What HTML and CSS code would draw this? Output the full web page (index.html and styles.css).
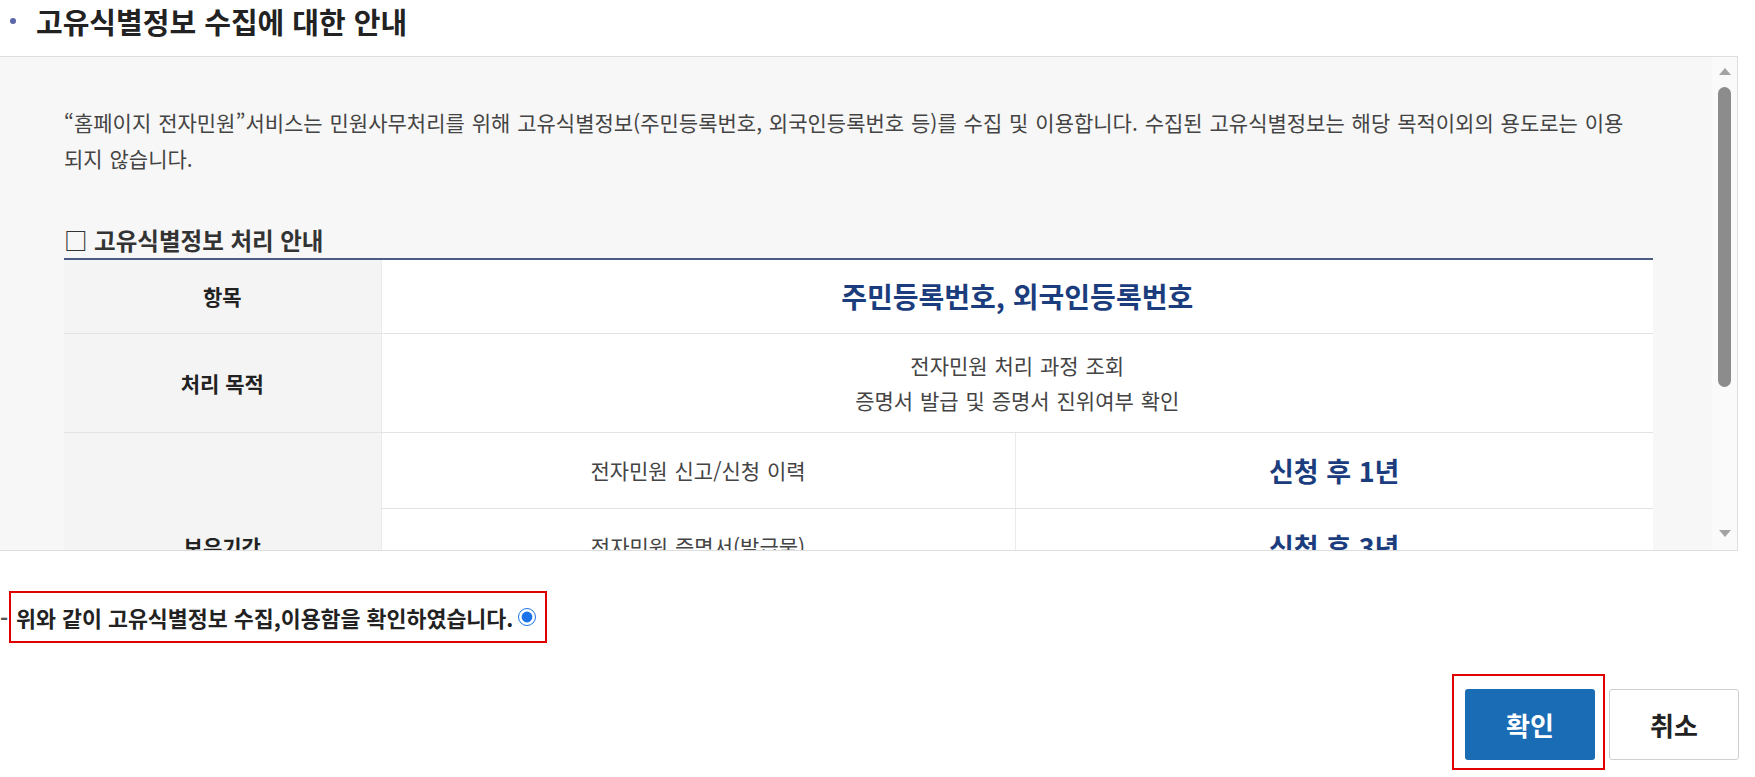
FILE: index.html
```html
<!DOCTYPE html>
<html lang="ko">
  <head>
    <meta charset="UTF-8" />
    <meta name="viewport" content="width=device-width, initial-scale=1.0" />
    <title>고유식별정보 수집에 대한 안내</title>

    <link rel="stylesheet" href="styles.css">
  </head>
  <body>
    <h2 class="section-title"><span class="bullet"></span>고유식별정보 수집에 대한 안내</h2>

    <div class="notice-box">
      <div class="notice-body">
        <p class="notice-text">“홈페이지 전자민원”서비스는 민원사무처리를 위해 고유식별정보(주민등록번호, 외국인등록번호 등)를 수집 및 이용합니다. 수집된 고유식별정보는 해당 목적이외의 용도로는 이용<br />되지 않습니다.</p>

        <h3 class="notice-subtitle">□ 고유식별정보 처리 안내</h3>
        <table class="info-table">
          <colgroup>
            <col class="col-head" />
            <col class="col-item" />
            <col />
          </colgroup>
          <tr class="row-item">
            <th>항목</th>
            <td colspan="2" class="strong strong-lg">주민등록번호, 외국인등록번호</td>
          </tr>
          <tr class="row-purpose">
            <th>처리 목적</th>
            <td colspan="2">전자민원 처리 과정 조회<br />증명서 발급 및 증명서 진위여부 확인</td>
          </tr>
          <tr class="row-period">
            <th rowspan="3">보유기간</th>
            <td>전자민원 신고/신청 이력</td>
            <td class="strong">신청 후 1년</td>
          </tr>
          <tr class="row-period">
            <td>전자민원 증명서(발급물)</td>
            <td class="strong">신청 후 3년</td>
          </tr>
          <tr class="row-period">
            <td>전자민원 수수료 결제 내역</td>
            <td class="strong">신청 후 5년</td>
          </tr>
        </table>
      </div>

      <div class="scrollbar">
        <span class="scroll-arrow up"></span>
        <span class="scroll-thumb"></span>
        <span class="scroll-space"></span>
        <span class="scroll-arrow down"></span>
      </div>
    </div>

    <div class="confirm">
      <span class="confirm-dash">-</span>
      <label class="confirm-box" for="agree">
        위와 같이 고유식별정보 수집,이용함을 확인하였습니다.
        <input type="radio" id="agree" name="agree" checked />
      </label>
    </div>

    <div class="actions">
      <span class="highlight">
        <button type="button" class="btn btn-primary">확인</button>
      </span>
      <button type="button" class="btn btn-default">취소</button>
    </div>
  </body>
</html>
```

FILE: styles.css
```css
* {
  margin: 0;
  padding: 0;
  box-sizing: border-box;
}

:root {
  font-family: "Noto Sans CJK KR", "Noto Sans", sans-serif;
  color: #222;
}

body {
  width: 1755px;
  background: #fff;
  overflow: hidden;
}

.section-title {
  display: flex;
  align-items: center;
  gap: 20px;
  margin-top: 4px;
  padding-left: 10px;
  font-size: 29px;
  line-height: 34px;
  font-weight: 700;
  color: #222;
}

.bullet {
  width: 6px;
  height: 6px;
  border-radius: 50%;
  background: #5b67a8;
}

.notice-box {
  display: flex;
  height: 495px;
  margin: 18px 17px 0 -1px;
  border: 1px solid #dedede;
  background: #f7f7f7;
}

.notice-body {
  flex: 1;
  overflow: hidden;
  padding: 47px 59px 0 64px;
}

.notice-text {
  margin-right: -20px;
  font-size: 21px;
  line-height: 36px;
  word-spacing: 1px;
  color: #444;
  word-break: keep-all;
}

.notice-subtitle {
  margin-top: 49px;
  padding-bottom: 3px;
  font-size: 23.5px;
  line-height: 30px;
  font-weight: 700;
  color: #333;
}

.info-table {
  width: 100%;
  table-layout: fixed;
  border-collapse: collapse;
  border-top: 2px solid #4d5a82;
}

.col-head {
  width: 317px;
}

.col-item {
  width: 634px;
}

.info-table th {
  background: #f4f4f4;
  border-bottom: 1px solid #e3e3e3;
  font-size: 21px;
  font-weight: 700;
  color: #222;
}

.info-table td {
  background: #fff;
  border-bottom: 1px solid #e3e3e3;
  border-left: 1px solid #ebebeb;
  text-align: center;
  font-size: 21px;
  line-height: 35px;
  word-spacing: 1px;
  color: #444;
}

.info-table td.strong {
  font-size: 27px;
  font-weight: 700;
  word-spacing: 0;
  color: #1b3d7d;
}

.info-table td.strong-lg {
  font-size: 28px;
}

.row-item {
  height: 74px;
}

.row-purpose {
  height: 99px;
}

.row-period {
  height: 76px;
}

.scrollbar {
  display: flex;
  flex-direction: column;
  align-items: center;
  width: 25px;
  padding: 11px 0 13px;
  background: #fafafa;
}

.scroll-arrow {
  width: 0;
  height: 0;
  border-left: 6px solid transparent;
  border-right: 6px solid transparent;
}

.scroll-arrow.up {
  border-bottom: 7px solid #a3a3a3;
}

.scroll-arrow.down {
  border-top: 7px solid #a3a3a3;
}

.scroll-thumb {
  width: 13px;
  height: 300px;
  margin-top: 12px;
  border-radius: 7px;
  background: #8c8c8c;
}

.scroll-space {
  flex: 1;
}

.confirm {
  display: flex;
  align-items: center;
  margin-top: 40px;
}

.confirm-dash {
  width: 9px;
  font-size: 22px;
  font-weight: 700;
  color: #555;
}

.confirm-box {
  display: flex;
  align-items: center;
  gap: 5px;
  height: 52px;
  padding: 0 9px 0 5px;
  border: 2px solid #e00000;
  font-size: 21.7px;
  font-weight: 700;
  color: #222;
}

.confirm-box input {
  width: 18px;
  height: 18px;
  margin: 0;
  accent-color: #1a73e8;
}

.actions {
  display: flex;
  justify-content: flex-end;
  align-items: flex-start;
  gap: 4px;
  margin-top: 31px;
  padding-right: 16px;
}

.highlight {
  display: flex;
  padding: 13px 8px 8px 11px;
  border: 2px solid #e00000;
}

.btn {
  width: 130px;
  height: 71px;
  border-radius: 3px;
  font-family: inherit;
  font-size: 26px;
  font-weight: 700;
  cursor: pointer;
}

.btn-primary {
  border: none;
  background: #1a6cb5;
  color: #fff;
}

.btn-default {
  margin-top: 15px;
  border: 1px solid #cfcfcf;
  background: #fff;
  color: #222;
}
```
